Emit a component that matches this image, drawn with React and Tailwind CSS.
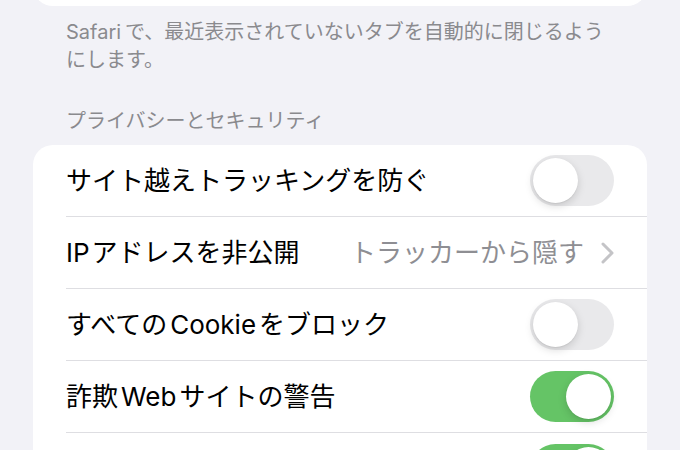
import React from "react";

const font = { fontFamily: '"Inter", "Noto Sans CJK JP", sans-serif' };

function Toggle({ on }) {
  return (
    <div
      className={
        "relative h-[51px] w-[84px] shrink-0 rounded-full " +
        (on ? "bg-[#65c466]" : "bg-[#e9e9eb]")
      }
    >
      <div
        className={
          "absolute top-[3px] h-[45px] w-[45px] rounded-full bg-white shadow-[0_3px_8px_rgba(0,0,0,0.15),0_1px_1px_rgba(0,0,0,0.06)] " +
          (on ? "left-[36px]" : "left-[3px]")
        }
      />
    </div>
  );
}

function Row({ children, right, last }) {
  return (
    <div className="pl-[33px]">
      <div
        className={
          "flex h-[72px] items-center justify-between pr-[33px] " +
          (last ? "" : "border-b border-[#dedee2]")
        }
      >
        <div className="text-[26px] leading-[32px] text-black">{children}</div>
        {right}
      </div>
    </div>
  );
}

const L = ({ children }) => <span className="px-[3px]">{children}</span>;

export default function App() {
  return (
    <div className="h-[450px] w-[680px] overflow-hidden bg-[#f2f2f7]" style={font}>
      <div className="mx-[33px] -mt-[40px] h-[46px] rounded-[20px] bg-white" />
      <div className="mt-[12px] pl-[66px] pr-[60px] text-[20px] leading-[28px] text-[#8a8a8e]">
        Safari<span className="pl-[4px]">で、最近表示されていないタブを自動的に閉じるようにします。</span>
      </div>
      <div className="mt-[33px] pl-[66px] text-[20px] leading-[28px] text-[#8a8a8e]">
        プライバシーとセキュリティ
      </div>
      <div className="mx-[33px] mt-[10px] overflow-hidden rounded-[20px] bg-white">
        <Row right={<Toggle on={false} />}>サイト越えトラッキングを防ぐ</Row>
        <Row
          right={
            <div className="flex items-center">
              <span className="text-[26px] leading-[32px] text-[#8e8e93]">トラッカーから隠す</span>
              <svg width="13" height="22" viewBox="0 0 13 22" className="ml-[17px]">
                <polyline
                  points="2,2 11,11 2,20"
                  fill="none"
                  stroke="#c4c4c7"
                  strokeWidth="3"
                  strokeLinecap="round"
                  strokeLinejoin="round"
                />
              </svg>
            </div>
          }
        >
          <span className="pr-[2px]">IP</span>アドレスを非公開
        </Row>
        <Row right={<Toggle on={false} />}>
          すべての<L>Cookie</L>をブロック
        </Row>
        <Row right={<Toggle on={true} />}>
          詐欺<L>Web</L>サイトの警告
        </Row>
        <Row right={<Toggle on={true} />} last>
          プライバシー保護広告測定
        </Row>
      </div>
    </div>
  );
}
